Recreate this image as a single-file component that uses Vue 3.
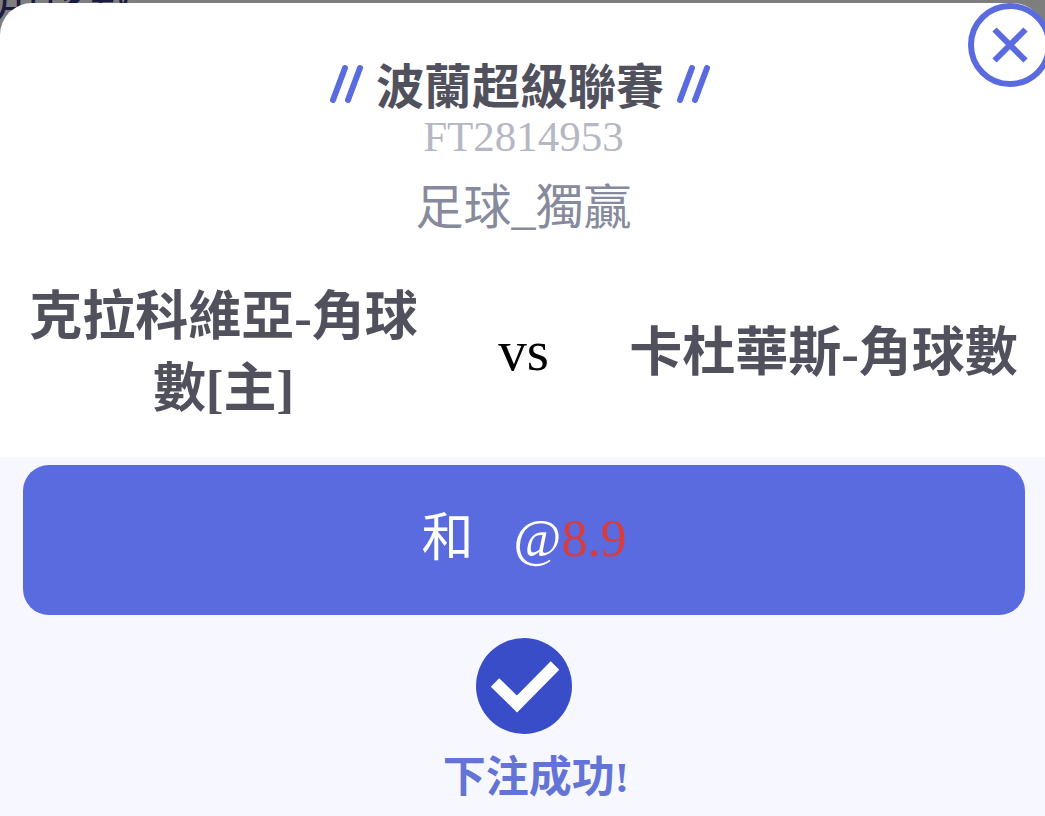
<script setup>
const bet = {
  league: '波蘭超級聯賽',
  id: 'FT2814953',
  market: '足球_獨贏',
  home: '克拉科維亞-角球數[主]',
  away: '卡杜華斯-角球數',
  pick: '和',
  odds: '8.9',
}
</script>

<template>
  <div class="page">
    <p class="backdrop-text" aria-hidden="true">角球數</p>
    <main class="dialog" role="dialog" aria-labelledby="league">
      <button class="close" type="button" aria-label="關閉">
        <svg viewBox="0 0 84 84" aria-hidden="true">
          <circle cx="42" cy="42" r="39" fill="#fff" stroke="#5a6bdf" stroke-width="6" />
          <path d="M26.5 26.5 57.5 57.5M57.5 26.5 26.5 57.5" fill="none" stroke="#5a6bdf" stroke-width="6" />
        </svg>
      </button>

      <header class="head">
        <div class="title">
          <svg class="slashes" viewBox="0 0 33 38" aria-hidden="true">
            <path d="M3 35 15 3M18 35 30 3" />
          </svg>
          <h1 id="league">{{ bet.league }}</h1>
          <svg class="slashes" viewBox="0 0 33 38" aria-hidden="true">
            <path d="M3 35 15 3M18 35 30 3" />
          </svg>
        </div>
        <p class="bet-id">{{ bet.id }}</p>
        <p class="market">{{ bet.market }}</p>
      </header>

      <section class="match">
        <h2>{{ bet.home }}</h2>
        <span class="vs">vs</span>
        <h2>{{ bet.away }}</h2>
      </section>

      <section class="result">
        <button class="pick" type="button">
          <span class="pick-line">
            <span>{{ bet.pick }}</span>
            <span>@<span class="odds">{{ bet.odds }}</span></span>
          </span>
        </button>
        <svg class="check" viewBox="0 0 96 96" aria-hidden="true">
          <circle cx="48" cy="48" r="48" fill="#3a4dc9" />
          <path d="M19 44.500 41 66 79 27.500" fill="none" stroke="#fff" stroke-width="12" />
        </svg>
        <p class="status">下注成功!</p>
      </section>
    </main>
  </div>
</template>

<style>
body {
  margin: 0;
  background: #7e7e7e;
}
</style>

<style scoped>
.page {
  position: relative;
  display: flex;
  flex-direction: column;
  min-height: 100vh;
  box-sizing: border-box;
  padding-top: 3px;
  overflow: hidden;
  background: #7e7e7e;
  font-family: "Liberation Serif", "Noto Sans CJK TC", serif;
}

h1,
h2,
p {
  margin: 0;
}

.backdrop-text {
  position: absolute;
  top: -28px;
  left: -6px;
  color: #1b1b42;
  font-size: 47px;
  line-height: 56px;
}

.dialog {
  position: relative;
  flex: 1;
  display: flex;
  flex-direction: column;
  background: #fff;
  border-radius: 32px 32px 0 0;
}

.close {
  position: absolute;
  top: 0;
  right: -7px;
  width: 84px;
  height: 84px;
  padding: 0;
  border: 0;
  border-radius: 50%;
  background: none;
}

.close svg {
  display: block;
}

.head {
  display: flex;
  flex-direction: column;
  align-items: center;
  padding: 49px 0 0 2px;
}

.title {
  display: flex;
  align-items: center;
  gap: 13px;
  padding-right: 7px;
}

.title h1 {
  padding-top: 8px;
  color: #50515d;
  font-size: 48px;
  line-height: 56px;
}

.slashes {
  width: 33px;
  height: 38px;
  fill: none;
  stroke: #5a6bdf;
  stroke-width: 6;
  stroke-linecap: round;
}

.bet-id {
  color: #b5b7c3;
  font-size: 43px;
  line-height: 42px;
}

.market {
  margin-top: 14px;
  color: #868a9c;
  font-size: 48px;
  line-height: 72px;
}

.match {
  flex: 1;
  display: grid;
  grid-template-columns: 19fr 10fr 19fr;
  align-items: center;
  padding: 4px 25px 0 27px;
  text-align: center;
}

.match h2 {
  color: #50515d;
  font-size: 53px;
  line-height: 72px;
  word-break: break-all;
}

.vs {
  padding-bottom: 4px;
  color: #000;
  font-size: 57px;
  line-height: 72px;
}

.result {
  display: flex;
  flex-direction: column;
  align-items: center;
  padding: 8px 20px 6px 23px;
  background: #f7f8ff;
}

.pick {
  display: flex;
  align-items: center;
  justify-content: center;
  width: 100%;
  height: 150px;
  padding: 0 0 14px;
  border: 0;
  border-radius: 26px;
  background: #5a6bdf;
  color: #fff;
  font-family: inherit;
  font-size: 52px;
}

.pick-line {
  display: flex;
  align-items: baseline;
  gap: 40px;
}

.odds {
  color: #d93c3c;
}

.check {
  width: 96px;
  height: 96px;
  margin-top: 23px;
}

.status {
  margin-top: 12px;
  padding-left: 24px;
  color: #6474d6;
  font-size: 43px;
  font-weight: 700;
  line-height: 64px;
}
</style>
